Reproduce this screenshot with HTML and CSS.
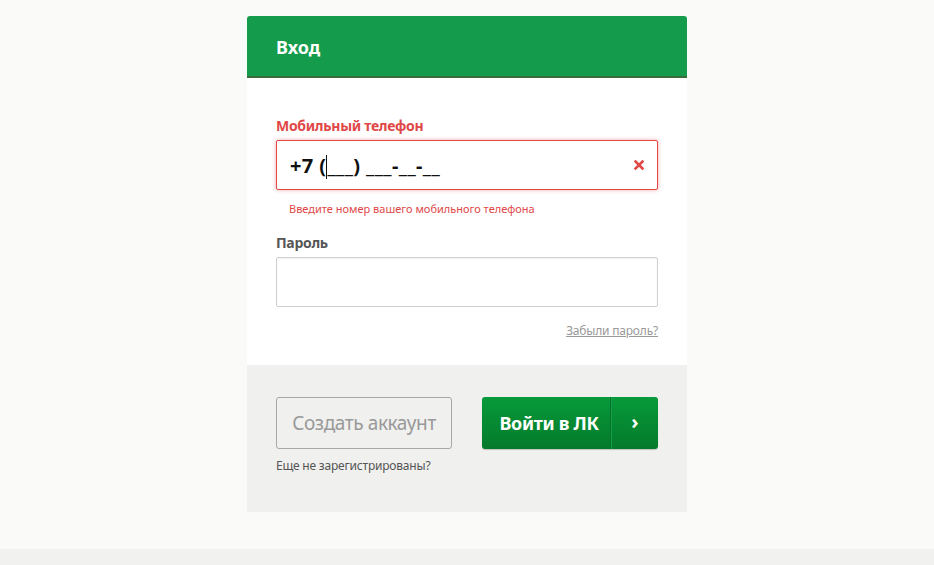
FILE: index.html
```html
<!DOCTYPE html>
<html lang="ru">
<head>
    <meta charset="UTF-8">
    <title>Вход</title>
    <link rel="stylesheet" href="styles.css">
</head>
<body>
<div class="page">
    <div class="card">
        <div class="card-header">Вход</div>
        <form class="card-body">
            <div class="field has-error">
                <label class="field-label" for="phone">Мобильный телефон</label>
                <div class="input-wrap">
                    <div class="input phone-input" id="phone">+7 (<span class="caret"></span>___) ___-__-__</div>
                    <svg class="clear-icon" width="10" height="10" viewBox="0 0 10 10">
                        <path d="M1.5 1.5 L8.5 8.5 M8.5 1.5 L1.5 8.5" stroke="#e04848" stroke-width="2.6" stroke-linecap="square"/>
                    </svg>
                </div>
                <div class="field-error">Введите номер вашего мобильного телефона</div>
            </div>
            <div class="field">
                <label class="field-label" for="password">Пароль</label>
                <input class="input" type="password" id="password">
            </div>
            <div class="forgot-row">
                <a href="#" class="forgot-link">Забыли пароль?</a>
            </div>
        </form>
        <div class="card-footer">
            <div class="footer-col">
                <button class="btn btn-outline" type="button">Создать аккаунт</button>
                <div class="footer-note">Еще не зарегистрированы?</div>
            </div>
            <div class="footer-col">
                <button class="btn btn-green" type="button">
                    <span class="btn-text">Войти в ЛК</span>
                    <span class="btn-arrow">&#8250;</span>
                </button>
            </div>
        </div>
    </div>
</div>
<div class="bottom-bar"></div>
</body>
</html>
```

FILE: styles.css
```css
body {
    margin: 0;
    padding: 0;
    background-color: #fafaf8;
    font-family: "Noto Sans", "Open Sans", sans-serif;
    color: #333;
}

.page {
    height: 549px;
    padding-top: 16px;
    box-sizing: border-box;
}

.card {
    width: 440px;
    margin: 0 auto;
}

.card-header {
    background-color: #149b4b;
    border-bottom: 2px solid #3b6d3c;
    border-radius: 3px 3px 0 0;
    height: 62px;
    box-sizing: border-box;
    padding: 18px 29px 0;
    color: #fff;
    font-size: 18px;
    font-weight: bold;
    line-height: 26px;
}

.card-body {
    background-color: #fff;
    padding: 39px 29px 25px;
    margin: 0;
}

.field {
    margin-bottom: 18px;
}

.field-label {
    display: block;
    font-size: 14px;
    font-weight: bold;
    line-height: 18px;
    color: #555;
    margin-bottom: 5px;
    letter-spacing: -0.3px;
}

.has-error .field-label {
    color: #e04848;
}

.input-wrap {
    position: relative;
}

.input {
    display: block;
    width: 100%;
    height: 50px;
    box-sizing: border-box;
    border: 1px solid #d0d0d0;
    border-radius: 2px;
    background: #fff;
    box-shadow: inset 0 1px 2px rgba(0, 0, 0, 0.05);
    font-family: inherit;
    font-size: 18px;
    padding: 0 13px;
    margin: 0;
}

.phone-input {
    border-color: #e04848;
    box-shadow: 0 0 4px rgba(224, 72, 72, 0.45);
    font-weight: bold;
    font-size: 20px;
    color: #111;
    line-height: 50px;
    letter-spacing: 0.4px;
}

.caret {
    display: inline-block;
    width: 1px;
    height: 24px;
    background: #111;
    vertical-align: -6px;
}

.clear-icon {
    position: absolute;
    right: 14px;
    top: 20px;
}

.field-error {
    font-size: 11px;
    color: #e04848;
    margin: 12px 0 0 13px;
    line-height: 14px;
}

.forgot-row {
    text-align: right;
    margin-top: -7px;
}

.forgot-link {
    font-size: 12px;
    color: #999;
    text-decoration: underline;
    letter-spacing: -0.2px;
}

.card-footer {
    background-color: #f0f0ee;
    padding: 32px 29px 0;
    height: 147px;
    box-sizing: border-box;
    display: flex;
    gap: 30px;
}

.footer-col {
    width: 176px;
}

.btn {
    width: 176px;
    height: 52px;
    border-radius: 3px;
    font-family: inherit;
    font-size: 18px;
    cursor: pointer;
    padding: 0;
    margin: 0;
}

.btn-outline {
    background: transparent;
    border: 1px solid #a8a8a8;
    color: #999;
    font-size: 19px;
    letter-spacing: -0.4px;
}

.btn-green {
    display: flex;
    align-items: stretch;
    border: none;
    background: linear-gradient(#079a3b, #047a2a);
    box-shadow: 0 1px 1px rgba(0, 0, 0, 0.2);
    color: #fff;
    font-weight: bold;
}

.btn-text {
    flex: 1;
    display: flex;
    align-items: center;
    justify-content: center;
    border-right: 1px solid #06702a;
    padding-left: 6px;
    letter-spacing: -0.3px;
}

.btn-arrow {
    width: 47px;
    display: flex;
    align-items: center;
    justify-content: center;
    border-left: 1px solid #12a048;
    font-size: 20px;
    padding-bottom: 3px;
    box-sizing: border-box;
}

.footer-note {
    font-size: 12px;
    color: #555;
    margin-top: 8px;
    letter-spacing: -0.2px;
}

.bottom-bar {
    height: 16px;
    background-color: #f1f1ef;
}
```
